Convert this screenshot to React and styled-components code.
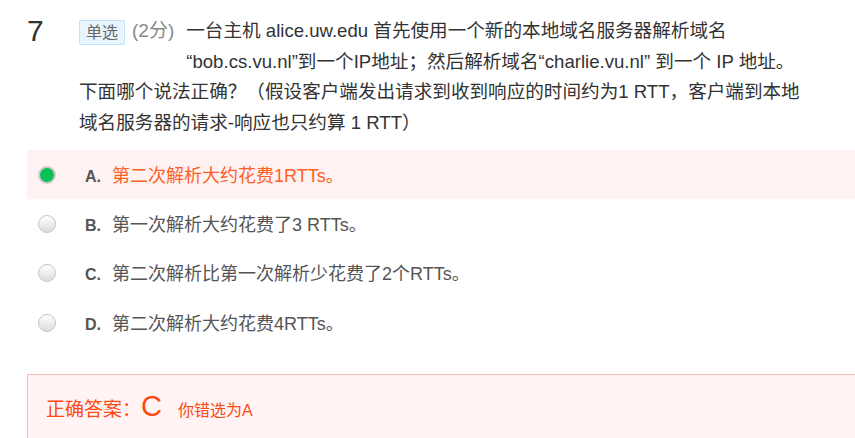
import React from 'react'
import styled, { createGlobalStyle } from 'styled-components'

const GlobalStyle = createGlobalStyle`
  html, body {
    margin: 0;
    padding: 0;
    background: #ffffff;
  }
  body {
    font-family: "Liberation Sans", Arial, "Noto Sans CJK SC", sans-serif;
    color: #333333;
  }
`

const options = [
  { key: 'A', text: '第二次解析大约花费1RTTs。', chosen: true },
  { key: 'B', text: '第一次解析大约花费了3 RTTs。' },
  { key: 'C', text: '第二次解析比第一次解析少花费了2个RTTs。' },
  { key: 'D', text: '第二次解析大约花费4RTTs。' },
]

const App = () => {
  return (
    <>
      <GlobalStyle />
      <Page>
        <Question>
          <Number>7</Number>
          <Body>
            <HeadRow>
              <Badge>单选</Badge>
              <Score>(2分)</Score>
              <Lead>
                一台主机 alice.uw.edu 首先使用一个新的本地域名服务器解析域名
                <br />
                “bob.cs.vu.nl”到一个IP地址；然后解析域名“charlie.vu.nl” 到一个 IP 地址。
              </Lead>
            </HeadRow>
            <Rest>
              下面哪个说法正确？（假设客户端发出请求到收到响应的时间约为1 RTT，客户端到本地
              <br />
              域名服务器的请求-响应也只约算 1 RTT）
            </Rest>
          </Body>
        </Question>

        <OptionList>
          {options.map((o) => (
            <OptionRow key={o.key} chosen={o.chosen}>
              <Radio chosen={o.chosen} />
              <OptionLabel>
                <OptionKey>{o.key}.</OptionKey>
                <OptionText chosen={o.chosen}>{o.text}</OptionText>
              </OptionLabel>
            </OptionRow>
          ))}
        </OptionList>

        <AnswerBox>
          <AnswerLabel>正确答案：</AnswerLabel>
          <AnswerLetter>C</AnswerLetter>
          <WrongNote>你错选为A</WrongNote>
        </AnswerBox>
      </Page>
    </>
  )
}

const Page = styled.div`
  padding: 16px 0 0 27px;
  height: 438px;
  box-sizing: border-box;
  overflow: hidden;
`

const Question = styled.div`
  display: flex;
`

const Number = styled.div`
  width: 52px;
  flex-shrink: 0;
  font-size: 30px;
  line-height: 34px;
  margin-top: -2px;
  color: #333;
`

const Body = styled.div`
  flex: 1;
  font-size: 18.6px;
  line-height: 30.5px;
  color: #333;
`

const HeadRow = styled.div`
  display: flex;
  align-items: flex-start;
`

const Badge = styled.span`
  display: inline-block;
  margin-top: 4px;
  height: 25px;
  line-height: 23px;
  padding: 0 6px;
  box-sizing: border-box;
  font-size: 16px;
  color: #666;
  background: #e8f5fe;
  border: 1px solid #bfe2fb;
  border-radius: 2px;
`

const Score = styled.span`
  margin-left: 7px;
  font-size: 19px;
  color: #888;
  white-space: nowrap;
`

const Lead = styled.div`
  margin-left: 12px;
  white-space: nowrap;
`

const Rest = styled.div`
  white-space: nowrap;
`

const OptionList = styled.div`
  margin-top: 12px;
`

const OptionRow = styled.div`
  display: flex;
  align-items: center;
  height: 49.3px;
  padding-left: 11px;
  background: ${(p) => (p.chosen ? '#fff2f2' : 'transparent')};
`

const Radio = styled.span`
  width: 18px;
  height: 18px;
  border-radius: 50%;
  box-sizing: border-box;
  flex-shrink: 0;
  border: ${(p) => (p.chosen ? '2px solid #cccccc' : '1px solid #c4c4c4')};
  background: ${(p) =>
    p.chosen ? '#0dc157' : 'linear-gradient(to bottom, #ffffff, #dcdcdc)'};
`

const OptionLabel = styled.div`
  display: flex;
  align-items: baseline;
  margin: 3px 0 0 29px;
  line-height: 24px;
`

const OptionKey = styled.span`
  width: 27px;
  font-size: 16px;
  font-weight: bold;
  color: #555;
`

const OptionText = styled.span`
  font-size: 18px;
  color: ${(p) => (p.chosen ? '#ff5f25' : '#555')};
`

const AnswerBox = styled.div`
  margin-top: 27px;
  height: 80px;
  display: flex;
  align-items: baseline;
  padding: 15px 0 0 18px;
  box-sizing: border-box;
  background: #fff3f3;
  border-top: 1px solid #f6bcbc;
  border-left: 1px solid #f6bcbc;
  color: #fb4a12;
`

const AnswerLabel = styled.span`
  font-size: 19px;
`

const AnswerLetter = styled.span`
  font-size: 29px;
`

const WrongNote = styled.span`
  margin-left: 16px;
  font-size: 16px;
`

export default App
